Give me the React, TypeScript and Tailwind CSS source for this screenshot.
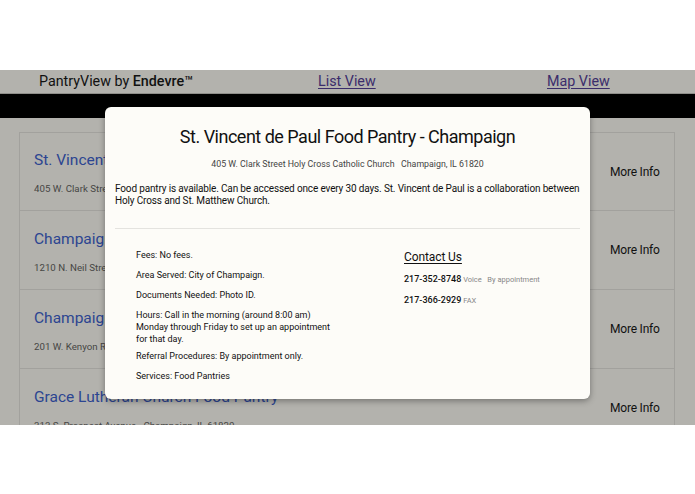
import React from "react";

const cards = [
  { title: "St. Vincent de Paul Food Pantry - Champaign", addr: "405 W. Clark Street Holy Cross Catholic Church   Champaign, IL 61820" },
  { title: "Champaign County Food Pantry", addr: "1210 N. Neil Street   Champaign, IL 61820" },
  { title: "Champaign Church of Christ Food Pantry", addr: "201 W. Kenyon Road   Champaign, IL 61820" },
  { title: "Grace Lutheran Church Food Pantry", addr: "313 S. Prospect Avenue   Champaign, IL 61820" },
];

export default function App() {
  return (
    <div className="w-[695px] h-[494px] bg-white overflow-hidden relative" style={{ fontFamily: "Roboto, 'Liberation Sans', sans-serif" }}>
      <div className="h-[70px] bg-white" />
      <div className="h-[355px] bg-[#b3b2ad] relative overflow-hidden">
        <div className="h-[24px] flex items-center border-b border-[#8f8e8a] text-[14.3px] text-[#111]">
          <div className="w-[279px] ml-[39px] leading-none">
            PantryView by <span className="font-medium">Endevre™</span>
          </div>
          <div className="w-[229px] leading-none text-[#3b2d6b] underline underline-offset-2">List View</div>
          <div className="leading-none text-[#3b2d6b] underline underline-offset-2">Map View</div>
        </div>
        <div className="h-[24px] bg-black" />
        <div className="pt-[14px] pl-[19px] pr-[20px]">
          {cards.map((c, i) => (
            <div key={i} className={`h-[79px] border border-[#a2a19d] ${i > 0 ? "border-t-0" : ""} flex items-center`}>
              <div className="flex-1 pl-[14px] pt-[2px] min-w-0">
                <div className="text-[15.5px] leading-[20px] text-[#2c4591] whitespace-nowrap">{c.title}</div>
                <div className="text-[9.7px] leading-[12px] text-[#464644] mt-[13px] whitespace-pre">{c.addr}</div>
              </div>
              <div className="w-[64px] text-[12px] tracking-[-0.2px] text-[#111]">More Info</div>
            </div>
          ))}
        </div>
      </div>

      <div className="absolute left-[105px] top-[107px] w-[485px] h-[292px] bg-[#fdfcf8] rounded-[6px] shadow-[0_2px_6px_rgba(0,0,0,0.35)] px-[10px] pt-[19px]">
        <div className="text-center text-[18px] tracking-[-0.5px] leading-[22px] text-[#111]">St. Vincent de Paul Food Pantry - Champaign</div>
        <div className="text-center text-[8.8px] leading-[12px] text-[#444] mt-[10px] whitespace-pre">405 W. Clark Street Holy Cross Catholic Church   Champaign, IL 61820</div>
        <div className="text-[10px] tracking-[-0.15px] leading-[12px] text-[#111] mt-[13px]">
          Food pantry is available. Can be accessed once every 30 days. St. Vincent de Paul is a collaboration between Holy Cross and St. Matthew Church.
        </div>
        <div className="h-px bg-[#e4e3df] mt-[21px]" />
        <div className="flex mt-[20px]">
          <div className="w-[289px] pl-[21px] text-[9px] leading-[12px] text-[#111] flex flex-col gap-[8px]">
            <div>Fees: No fees.</div>
            <div>Area Served: City of Champaign.</div>
            <div>Documents Needed: Photo ID.</div>
            <div className="w-[200px]">Hours: Call in the morning (around 8:00 am) Monday through Friday to set up an appointment for that day.</div>
            <div className="mt-[-3px]">Referral Procedures: By appointment only.</div>
            <div>Services: Food Pantries</div>
          </div>
          <div className="flex flex-col">
            <div className="text-[12px] tracking-[-0.1px] leading-[15px] text-[#111] underline underline-offset-2 mt-[1px]">Contact Us</div>
            <div className="mt-[8px] text-[9px] leading-[12px] whitespace-pre">
              <span className="font-medium text-[#111]">217-352-8748</span>
              <span className="text-[7.5px] text-[#888]"> Voice   By appointment</span>
            </div>
            <div className="mt-[8px] text-[9px] leading-[12px]">
              <span className="font-medium text-[#111]">217-366-2929</span>
              <span className="text-[7.5px] text-[#888]"> FAX</span>
            </div>
          </div>
        </div>
      </div>
    </div>
  );
}
